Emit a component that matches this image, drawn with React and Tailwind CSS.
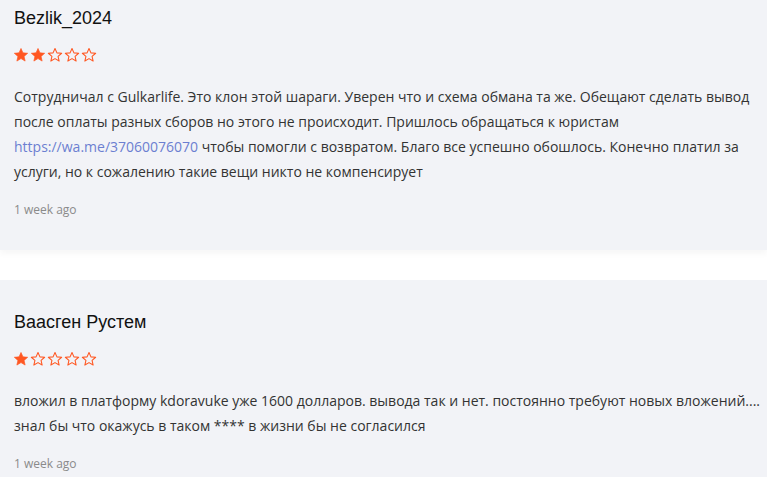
import React from 'react';

function Star({ filled }) {
  return (
    <svg className="w-[16px] h-[16px]" viewBox="0 0 24 24" fill={filled ? '#ff5722' : 'none'} stroke="#ff5722" strokeWidth={filled ? 1 : 1.6} strokeLinejoin="round">
      <path d="M12 2.2l2.9 6.6 7.1.6-5.4 4.7 1.6 7-6.2-3.7-6.2 3.7 1.6-7L2 9.4l7.1-.6z" />
    </svg>
  );
}

function Review({ name, rating, children, time }) {
  return (
    <div className="bg-[#f2f3f7] pl-[14px] pr-[6px] pt-[31px] pb-[32px] shadow-[0_4px_6px_rgba(0,0,0,0.035)]">
      <div className="text-[18px] leading-[22px] text-[#111] font-['Liberation_Sans',Arial,sans-serif]">{name}</div>
      <div className="mt-[18px] -ml-[1px] flex gap-[1px]">
        {[1, 2, 3, 4, 5].map((i) => (
          <Star key={i} filled={i <= rating} />
        ))}
      </div>
      <p className="mt-[21px] text-[14px] leading-[25px] text-[#333] font-['Open_Sans',sans-serif]">{children}</p>
      <div className="mt-[18px] text-[12px] leading-[16px] text-[#8a8a8a] font-['Open_Sans',sans-serif]">{time}</div>
    </div>
  );
}

export default function App() {
  return (
    <div className="bg-white min-h-screen overflow-hidden">
      <div className="mt-[-24px] flex flex-col gap-[30px]">
        <Review name="Bezlik_2024" rating={2} time="1 week ago">
          Сотрудничал с Gulkarlife. Это клон этой шараги. Уверен что и схема обмана та же. Обещают сделать вывод после оплаты разных сборов но этого не происходит. Пришлось обращаться к юристам{' '}
          <a href="#" className="text-[#6c7fd1]">https://wa.me/37060076070</a> чтобы помогли с возвратом. Благо все успешно обошлось. Конечно платил за услуги, но к сожалению такие вещи никто не компенсирует
        </Review>
        <Review name="Ваасген Рустем" rating={1} time="1 week ago">
          вложил в платформу kdoravuke уже 1600 долларов. вывода так и нет. постоянно требуют новых вложений.... знал бы что окажусь в таком **** в жизни бы не согласился
        </Review>
      </div>
    </div>
  );
}
